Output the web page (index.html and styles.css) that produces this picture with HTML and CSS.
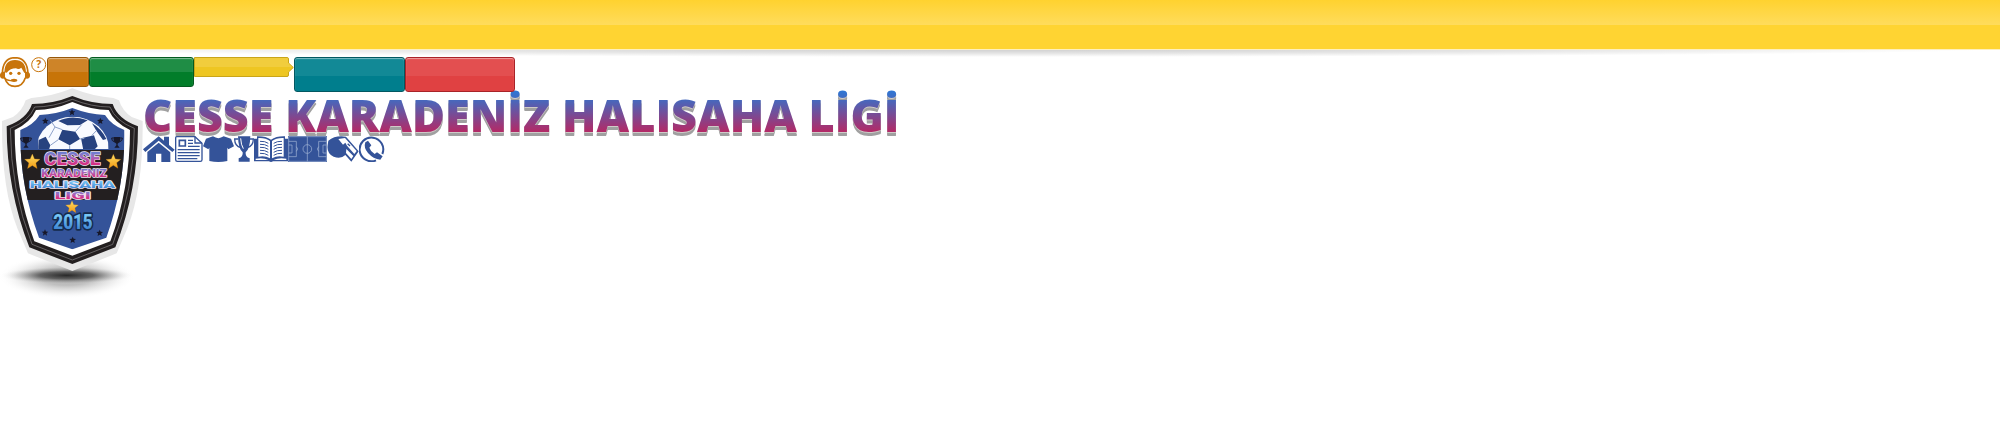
FILE: index.html
```html
<!DOCTYPE html>
<html lang="tr">
<head>
<meta charset="utf-8">
<title>Cesse Karadeniz Halısaha Ligi</title>
<link rel="stylesheet" href="styles.css">
</head>
<body>
<header class="topbar"></header>
<nav class="buttons">
  <svg class="support" width="47" height="31" viewBox="0 0 141 93">
    <path d="M7 50Q8 3 45 2Q82 3 84 50" fill="none" stroke="#c8740b" stroke-width="5"/>
    <path d="M13 46Q14 9 45 9Q77 9 78 46L73 48Q68 39 64 32Q56 39 48 34Q31 34 20 47Z" fill="#c8740b"/>
    <path d="M8 44Q-1 46 0 56Q0 64 9 65L15 64V44ZM82 44Q91 46 90 56Q90 64 81 65L75 64V44Z" fill="#c8740b"/>
    <path d="M14 62Q22 88 45 88Q68 88 76 62" fill="none" stroke="#c8740b" stroke-width="5"/>
    <circle cx="32" cy="49" r="5" fill="#c8740b"/><circle cx="57" cy="49" r="5" fill="#c8740b"/>
    <path d="M13 62Q20 72 34 71" fill="none" stroke="#c8740b" stroke-width="4"/>
    <ellipse cx="42" cy="70" rx="10" ry="5" fill="#c8740b"/>
    <circle cx="116" cy="23" r="21" fill="#fff" stroke="#c8740b" stroke-width="3"/>
    <text class="mark" x="116" y="34" text-anchor="middle">?</text>
  </svg>
  <a class="btn orange"></a>
  <a class="btn green"></a>
  <svg class="tag" width="100" height="20" viewBox="0 0 100 20">
    <path d="M.5 .5H93Q94.500 .5 94.500 2V6L99.300 10.500L94.500 15V18Q94.500 19.500 93 19.500H.5Z" fill="#eec622" stroke="#c9a51a"/>
    <path d="M1 1H93Q94 1 94 2V6L98 10H1Z" fill="#f1cd3d"/>
  </svg>
  <a class="btn teal"></a>
  <a class="btn red"></a>
</nav>
<main class="brand">
  <svg class="logo" width="144" height="215" viewBox="0 0 432 645">
    <defs>
      <radialGradient id="floor"><stop offset="0" stop-color="#222" stop-opacity=".95"/><stop offset=".4" stop-color="#444" stop-opacity=".75"/><stop offset=".75" stop-color="#888" stop-opacity=".25"/><stop offset="1" stop-color="#fff" stop-opacity="0"/></radialGradient>
      <linearGradient id="pink" x1="0" y1="0" x2="0" y2="1"><stop offset="0" stop-color="#3f8fe0"/><stop offset=".4" stop-color="#a468bd"/><stop offset=".75" stop-color="#d52f83"/></linearGradient>
      <linearGradient id="sky" x1="0" y1="0" x2="0" y2="1"><stop offset=".2" stop-color="#77c6f4"/><stop offset="1" stop-color="#2c70c8"/></linearGradient>
      <linearGradient id="gold" x1="0" y1="0" x2="0" y2="1"><stop offset="0" stop-color="#ffe067"/><stop offset="1" stop-color="#f29a12"/></linearGradient>
      <path id="star" d="M0-10L2.800-3.500L10-3L4.500 1.600L6.200 9L0 5L-6.200 9L-4.500 1.600L-10-3L-2.800-3.500Z"/>
      <clipPath id="dome"><path d="M115 192V95H325V192Z"/></clipPath>
      <clipPath id="field"><path d="M217 69Q265 88 315 90Q334 120 373 135Q376 300 319 458L217 493L117 458Q58 300 61 135Q100 120 119 90Q169 88 217 69Z"/></clipPath>
    </defs>
    <ellipse cx="200" cy="575" rx="205" ry="66" fill="url(#floor)" opacity=".45"/>
    <ellipse cx="200" cy="571" rx="200" ry="27" fill="url(#floor)"/>
    <path d="M217 10Q280 35 340 39L357 46Q367 78 395 96L428 108Q430 310 382 430L350 505L217 558L84 505L52 430Q4 310 6 108L39 96Q67 78 77 46L94 39Q154 35 217 10Z" fill="#e7e7e7"/>
    <path d="M217 33Q275 57 338 57Q353 102 414 124Q414 315 346 487L217 537L88 487Q20 315 20 124Q81 102 96 57Q159 57 217 33Z" fill="#231f20"/>
    <path d="M217 43Q275 66 330 66Q347 108 403 130Q402 315 338 478L217 525L96 478Q32 315 31 130Q87 108 104 66Q159 66 217 43Z" fill="none" stroke="#8a8788" stroke-width="2"/>
    <path d="M217 51Q275 75 326 75Q342 112 390 135Q390 310 331 469L217 512L103 469Q44 310 44 135Q92 112 108 75Q159 75 217 51Z" fill="#fff"/>
    <g clip-path="url(#field)">
      <path d="M40 60H395V500H40Z" fill="#345399"/>
      <path d="M40 195H395V345H40Z" fill="#231f20"/>
      <g clip-path="url(#dome)">
        <ellipse cx="218" cy="192" rx="109" ry="97" fill="#f8faff"/>
        <path d="M175 108Q215 88 263 106L240 120L202 121ZM187 134L226 140L240 162L209 181L175 163ZM116 165L137 155L151 181L147 194H113ZM243 160L282 151L293 184L282 195H250ZM276 115Q304 131 319 162L309 165L289 137Z" fill="#27427f"/>
        <path d="M151 105L165 126L147 158M165 126L187 134M226 140L245 119M275 152L289 137M175 164L151 181M209 181V195M240 162L253 160" fill="none" stroke="#8da1c9" stroke-width="3"/>
      </g>
    </g>
    <g fill="#17182a">
      <use href="#star" transform="translate(216 82)"/><use href="#star" transform="translate(136 108)"/><use href="#star" transform="translate(301 108)"/>
      <use href="#star" transform="translate(135 443)"/><use href="#star" transform="translate(299 444)"/><use href="#star" transform="translate(218 465)"/>
      <g id="cup"><path d="M68 156H88V166Q87 174 80 176V181L86 188H70L76 181V176Q69 174 68 166Z"/><path d="M68 159H62Q61 168 71 171M88 159H94Q95 168 85 171" fill="none" stroke="#17182a" stroke-width="3"/></g>
      <use href="#cup" x="273"/>
    </g>
    <g fill="url(#gold)" stroke="#d88b16" stroke-width=".4">
      <use href="#star" transform="translate(97 230) scale(2.300)"/><use href="#star" transform="translate(340 230) scale(2.200)"/><use href="#star" transform="translate(216 366) scale(1.900)"/>
    </g>
    <g class="crest">
      <text x="133" y="240" textLength="168" lengthAdjust="spacingAndGlyphs" font-size="53" fill="url(#pink)">CESSE</text>
      <text x="124" y="277" textLength="196" lengthAdjust="spacingAndGlyphs" font-size="35" fill="url(#pink)">KARADENIZ</text>
      <text x="89" y="310" textLength="256" lengthAdjust="spacingAndGlyphs" font-size="29" fill="url(#sky)">HALISAHA</text>
      <text x="164" y="341" textLength="108" lengthAdjust="spacingAndGlyphs" font-size="28" fill="url(#pink)">LIGI</text>
      <text class="year" x="160" y="432" textLength="118" lengthAdjust="spacingAndGlyphs" font-size="59" fill="url(#sky)">2015</text>
    </g>
  </svg>
  <div class="column">
    <h1 class="title">CESSE KARADENİZ HALISAHA LİGİ</h1>
    <div class="menu">
      <svg width="32" height="26" viewBox="0 0 96 78"><path d="M0 40L47 1L63 14V2H78V27L95 41L88 48L47 14L7 48Z"/><path d="M13 48L47 20L82 49V78H55V53H39V78H13Z"/></svg>
      <svg width="28" height="26" viewBox="0 0 84 78"><path d="M5 2H60L81 22V71Q81 76 76 76H7Q2 76 2 71V5Q2 2 5 2Z" fill="#fff" stroke="#345399" stroke-width="4"/><path d="M60 2V21H81M39 13H54M39 22H54M39 31H74M8 41H74M8 50H74M8 59H74M8 68H67" fill="none" stroke="#345399" stroke-width="4"/><path d="M13 13H31V30H13Z" fill="#fff" stroke="#345399" stroke-width="5"/></svg>
      <svg width="31" height="26" viewBox="0 0 93 78"><path d="M30 1Q46 12 62 1L84 8L93 31L76 40L73 35V75Q46 81 19 75V35L16 40L0 31L9 8Z"/></svg>
      <svg width="20" height="26" viewBox="0 0 60 78"><path d="M12 1H49Q48 39 35 49Q33 63 47 67V77H14V67Q28 63 26 49Q13 39 12 1Z"/><path d="M13 9H2Q2 31 21 35M48 9H58Q58 31 39 35" fill="none" stroke="#345399" stroke-width="4"/><path d="M20 7Q21 27 28 38" fill="none" stroke="#fff" stroke-width="3"/></svg>
      <svg width="34" height="26" viewBox="0 0 102 78"><path d="M0 8H9V1Q35 0 51 11Q67 0 93 1V8H102V76H57Q51 80 45 76H0Z"/><path d="M13 6Q35 5 48 15V67Q33 58 13 62ZM89 6Q67 5 54 15V67Q69 58 89 62ZM5 68Q29 64 43 72H5ZM97 68Q73 64 59 72H97Z" fill="#fff"/><path d="M18 16Q33 15 43 22M18 25Q33 24 43 31M18 34Q33 33 43 40M18 43Q33 42 43 49M18 52Q33 51 43 58M84 16Q69 15 59 22M84 25Q69 24 59 31M84 34Q69 33 59 40M84 43Q69 42 59 49M84 52Q69 51 59 58" fill="none" stroke="#345399" stroke-width="3"/></svg>
      <svg width="39" height="26" viewBox="0 0 117 78"><path d="M0 0H117V78H0Z"/><path d="M2 2H115V76H2ZM58 2V76M2 16H25V62H2M2 27H12V51H2M115 16H92V62H115M115 27H105V51H115M25 32Q33 39 25 46M92 32Q84 39 92 46" fill="none" stroke="#a5b6d8" stroke-width="2"/><circle cx="58" cy="39" r="13" fill="none" stroke="#a5b6d8" stroke-width="2"/></svg>
      <svg width="32" height="26" viewBox="0 0 96 78"><path d="M4 14Q25-3 57 2L95 46L73 77L55 57Q42 70 20 62Q-2 52 2 27Z"/><path d="M34 9L54 6L89 45L82 54L60 29L55 20L48 26ZM58 39L79 60L73 69L57 51Z" fill="#fff"/><path d="M62 23L69 30" fill="none" stroke="#345399" stroke-width="4"/></svg>
      <svg width="27" height="26" viewBox="0 0 81 78"><path d="M51 73A35.500 35.500 0 1 1 70 54" fill="none" stroke="#345399" stroke-width="6"/><path d="M19 19L27 14L37 28L31 35Q35 47 47 54L54 49L71 61L64 71Q43 69 27 51Q13 35 19 19Z"/></svg>
    </div>
  </div>
</main>
</body>
</html>
```
FILE: styles.css
```css
body {
  margin: 0;
  background: #fff;
  font-family: "Open Sans", sans-serif;
  overflow: hidden;
}

.topbar {
  height: 57px;
  background:
    linear-gradient(#ffd22f 0, #ffdc5c 25px, #ffd432 25px, #ffd432 49px, #fff0bd 49px) 0 0 / 100% 50px no-repeat,
    radial-gradient(50% 8px at 50% 49px, rgba(0, 0, 0, .2), rgba(0, 0, 0, .1) 55%, transparent) no-repeat;
}

.buttons {
  display: flex;
  align-items: flex-start;
  height: 28px;
  position: relative;
  z-index: 1;
}

.mark {
  font: 700 31px "Open Sans", sans-serif;
  fill: #c8740b;
}

.btn {
  box-sizing: border-box;
  border: 1px solid;
  border-radius: 3px;
  box-shadow: inset 0 1px 1px rgba(255, 255, 255, .45);
}

.orange {
  width: 42px;
  height: 30px;
  border-color: #97580a;
  background: linear-gradient(#ce8428 50%, #c77408 50%);
}

.green {
  width: 105px;
  height: 30px;
  border-color: #045b20;
  background: linear-gradient(#1f8d45 50%, #027d2a 50%);
}

.teal {
  width: 111px;
  height: 35px;
  border-color: #035861;
  background: linear-gradient(#128996 54%, #007e8d 54%);
}

.red {
  width: 110px;
  height: 35px;
  border-color: #a92328;
  background: linear-gradient(#e34f50 54%, #e04142 54%);
}

.brand {
  display: flex;
  align-items: flex-start;
}

.logo {
  flex: none;
}

.crest {
  font-family: "Roboto", sans-serif;
  font-weight: 900;
  stroke: #f5e8f5;
  stroke-width: 4px;
  stroke-linejoin: round;
  paint-order: stroke;
}

.year {
  stroke: #142b4d;
  stroke-width: 10px;
}

.column {
  display: flex;
  flex-direction: column;
  margin-left: -1px;
}

.title {
  margin: 0;
  height: 51px;
  line-height: 59px;
  font-size: 45px;
  font-weight: 800;
  white-space: nowrap;
  color: transparent;
  background: linear-gradient(#287bdc 3px, #4668bd 15px, #b12b68 46px);
  background-clip: text;
  -webkit-background-clip: text;
  filter: drop-shadow(0 1px 0 #d0cbc8) drop-shadow(0 3px 0 #a0a0a0);
}

.menu {
  display: flex;
  height: 26px;
  position: relative;
  fill: #345399;
}
```
